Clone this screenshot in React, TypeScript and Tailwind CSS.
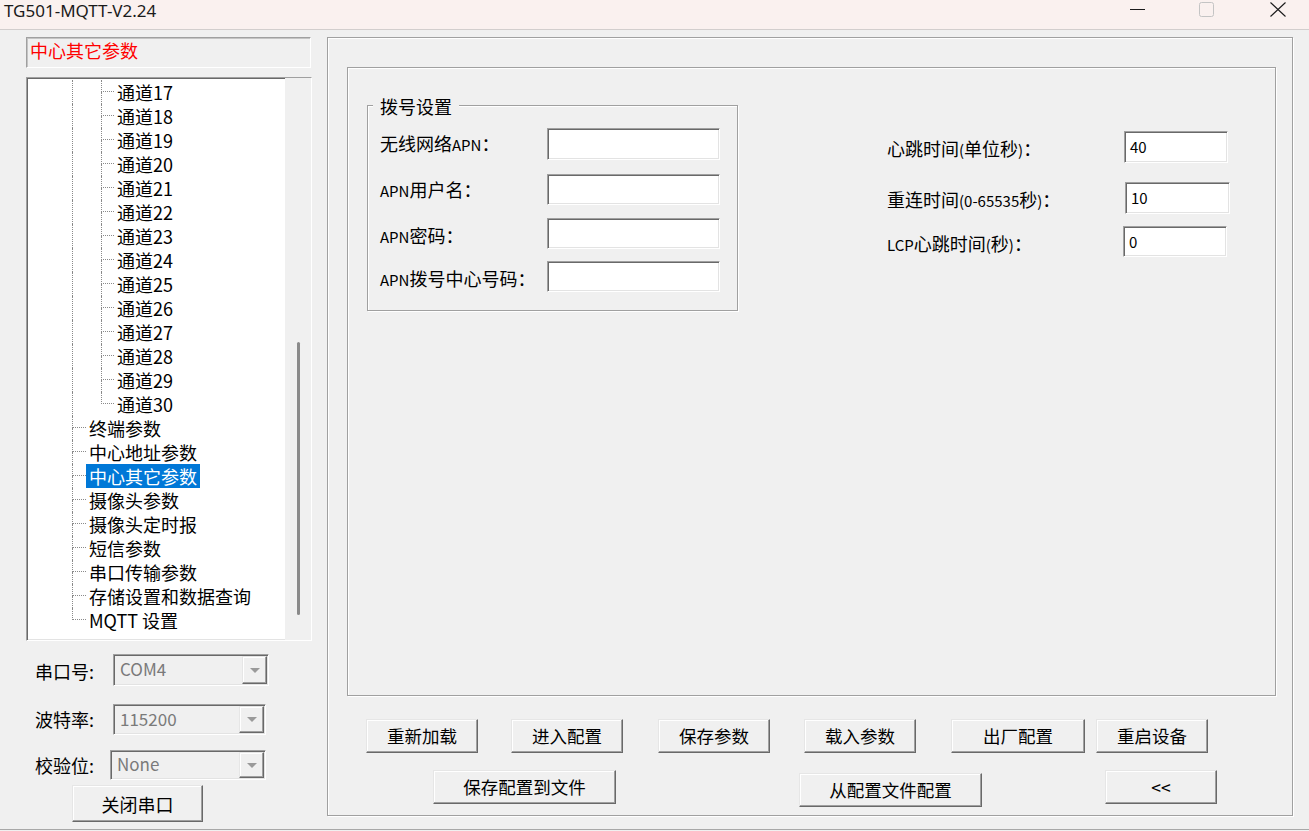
import React from "react";

const sunken =
  "border border-t-[#a0a0a0] border-l-[#a0a0a0] border-r-white border-b-white shadow-[inset_1px_1px_0_#696969,inset_-1px_-1px_0_#e3e3e3]";
const raised =
  "border border-t-[#e6e6e6] border-l-[#e6e6e6] border-r-[#696969] border-b-[#696969] shadow-[inset_-1px_-1px_0_#a0a0a0,inset_1px_1px_0_#ffffff] bg-[#f0f0f0]";
const etched = "border border-[#a0a0a0] shadow-[1px_1px_0_#ffffff,inset_1px_1px_0_#ffffff]";
const dot = "border-dotted border-[#8a8a8a]";

function Btn({ label, className = "" }: { label: string; className?: string }) {
  return (
    <div
      className={`${raised} h-[34px] shrink-0 flex items-center justify-center text-[17.5px] leading-none text-black ${className}`}
    >
      {label}
    </div>
  );
}

function Connector({ last, w }: { last: boolean; w: string }) {
  return (
    <div className={`${w} shrink-0 flex flex-col`}>
      <div className={`h-[12px] border-l border-b ${dot}`} />
      <div className={`h-[12px] ${last ? "" : `border-l ${dot}`}`} />
    </div>
  );
}

function Combo({ cls, value }: { cls: string; value: string }) {
  return (
    <div className={`${sunken} ${cls} bg-[#f0f0f0] flex items-stretch p-[1px] shrink-0`}>
      <div className="flex-1 flex items-center pl-[5px] pb-[3px] text-[17px] text-[#7a7a7a] leading-none">{value}</div>
      <div className={`${raised} w-[25px] flex items-center justify-center`}>
        <svg width="10" height="5" viewBox="0 0 10 5">
          <path d="M0 0 H10 L5 5 Z" fill="#9a9a9a" />
        </svg>
      </div>
    </div>
  );
}

function Edit({ cls, value = "" }: { cls: string; value?: string }) {
  return (
    <div className={`${sunken} ${cls} bg-white shrink-0 flex items-center pl-[5px] pb-[1px] text-[15px] leading-none text-black`}>
      {value}
    </div>
  );
}

const channels = Array.from({ length: 14 }, (_, i) => `通道${17 + i}`);
const tops = [
  "终端参数",
  "中心地址参数",
  "中心其它参数",
  "摄像头参数",
  "摄像头定时报",
  "短信参数",
  "串口传输参数",
  "存储设置和数据查询",
  "MQTT 设置",
];

export default function App() {
  return (
    <div className="w-[1309px] h-[831px] bg-[#f0f0f0] overflow-hidden font-['Noto_Sans_CJK_SC',sans-serif] text-black flex flex-col">
      {/* Title bar */}
      <div className="h-[30px] shrink-0 bg-[#faf1ef] border-b border-[#d2cecd] flex items-start">
        <span className="ml-[4px] leading-[21px] text-[17px] text-[#1b1b1b] font-['Noto_Sans',sans-serif]">
          TG501-MQTT-V2.24
        </span>
        <div className="ml-auto flex items-start pr-[23px]">
          <svg width="15" height="20" viewBox="0 0 15 20">
            <line x1="0" y1="9.5" x2="15" y2="9.5" stroke="#1b1b1b" strokeWidth="1" />
          </svg>
          <svg width="15" height="20" viewBox="0 0 15 20" className="ml-[54px]">
            <rect x="0.5" y="2.5" width="14" height="14" rx="2" fill="none" stroke="#c4c4c4" strokeWidth="1" />
          </svg>
          <svg width="16" height="20" viewBox="0 0 16 20" className="ml-[56px]">
            <path d="M0.5 2.5 L15.5 16.5 M15.5 2.5 L0.5 16.5" stroke="#1b1b1b" strokeWidth="1.1" fill="none" />
          </svg>
        </div>
      </div>

      {/* Body */}
      <div className="h-[799px] shrink-0 flex">
        {/* Left column */}
        <div className="w-[311px] shrink-0 pl-[26px] flex flex-col">
          <div className="w-[285px] h-[31px] mt-[7px] border border-t-[#a0a0a0] border-l-[#a0a0a0] border-r-white border-b-white shadow-[inset_1px_1px_0_#c4c4c4] flex items-center pl-[3px] pb-[5px] text-[18px] leading-none text-[#ff0000]">
            中心其它参数
          </div>

          {/* Tree */}
          <div className={`${sunken} mt-[9px] w-[286px] h-[564px] flex bg-white overflow-hidden`}>
            <div className="w-[258px] shrink-0 pt-[2px] pl-[1px] text-[18px] leading-[24px]">
              {channels.map((c, i) => (
                <div key={c} className="flex h-[24px]">
                  <div className="w-[44px] shrink-0" />
                  <div className={`w-[29px] shrink-0 border-l ${dot}`} />
                  <Connector last={i === channels.length - 1} w="w-[13px]" />
                  <span className="ml-[3px] whitespace-nowrap">{c}</span>
                </div>
              ))}
              {tops.map((t, i) => (
                <div key={t} className="flex h-[24px]">
                  <div className="w-[44px] shrink-0" />
                  <Connector last={i === tops.length - 1} w="w-[14px]" />
                  <span
                    className={`px-[3px] whitespace-nowrap ${t === "中心其它参数" ? "bg-[#0078d7] text-white" : ""}`}
                  >
                    {t}
                  </span>
                </div>
              ))}
            </div>
            <div className="flex-1 bg-[#f0f0f0] flex justify-center">
              <div className="w-[3px] h-[273px] mt-[264px] rounded-full bg-[#8a8a8a]" />
            </div>
          </div>

          {/* Serial settings */}
          <div className="mt-[13px] flex items-center pl-[9px] text-[18px] leading-none">
            <span className="w-[78px] pt-[2px] shrink-0">串口号:</span>
            <Combo cls="w-[156px] h-[32px]" value="COM4" />
          </div>
          <div className="mt-[18px] flex items-center pl-[9px] text-[18px] leading-none">
            <span className="w-[78px] pb-[1px] shrink-0">波特率:</span>
            <Combo cls="w-[153px] h-[31px]" value="115200" />
          </div>
          <div className="mt-[15px] flex items-center pl-[9px] text-[18px] leading-none">
            <span className="w-[75px] shrink-0">校验位:</span>
            <Combo cls="w-[156px] h-[30px]" value="None" />
          </div>
          <div className={`${raised} mt-[5px] ml-[46px] w-[131px] h-[37px] flex items-center justify-center text-[18px] leading-none`}>
            关闭串口
          </div>
        </div>

        {/* Right frame */}
        <div className={`${etched} ml-[16px] mt-[7px] w-[966px] h-[779px] shrink-0 flex flex-col`}>
          <div className={`${etched} mt-[29px] ml-[19px] w-[929px] h-[629px] shrink-0 flex items-start`}>
            {/* Group box */}
            <div className={`${etched} mt-[37px] ml-[19px] w-[371px] h-[206px] shrink-0 flex flex-col pl-[12px] text-[18px] leading-none`}>
              <div className="-mt-[12px] -ml-[7px] w-fit px-[7px] bg-[#f0f0f0] leading-[24px] pb-[1px]">拨号设置</div>
              <div className="mt-[9px] flex items-center">
                <span className="w-[167px] shrink-0 pb-[3px] whitespace-nowrap">
                  无线网络<span className="text-[15px]">APN</span>：
                </span>
                <Edit cls="w-[173px] h-[32px]" />
              </div>
              <div className="mt-[14px] flex items-center">
                <span className="w-[167px] shrink-0 pb-[2px] whitespace-nowrap">
                  <span className="text-[15px]">APN</span>用户名：
                </span>
                <Edit cls="w-[173px] h-[31px]" />
              </div>
              <div className="mt-[13px] flex items-center">
                <span className="w-[167px] shrink-0 pt-[3px] whitespace-nowrap">
                  <span className="text-[15px]">APN</span>密码：
                </span>
                <Edit cls="w-[173px] h-[31px]" />
              </div>
              <div className="mt-[12px] flex items-center">
                <span className="w-[167px] shrink-0 pt-[3px] whitespace-nowrap">
                  <span className="text-[15px]">APN</span>拨号中心号码：
                </span>
                <Edit cls="w-[173px] h-[31px]" />
              </div>
            </div>

            {/* Right params */}
            <div className="ml-[149px] mt-[63px] flex flex-col text-[18px] leading-none">
              <div className="flex items-center">
                <span className="w-[237px] shrink-0 pt-[2px] whitespace-nowrap">
                  心跳时间<span className="text-[15px]">(</span>单位秒<span className="text-[15px]">)</span>：
                </span>
                <Edit cls="w-[104px] h-[32px]" value="40" />
              </div>
              <div className="mt-[19px] flex items-center">
                <span className="w-[237px] shrink-0 pt-[2px] whitespace-nowrap">
                  重连时间<span className="text-[15px]">(0-65535</span>秒<span className="text-[15px]">)</span>：
                </span>
                <Edit cls="ml-[1px] w-[105px] h-[32px]" value="10" />
              </div>
              <div className="mt-[12px] flex items-center">
                <span className="w-[236px] shrink-0 pt-[3px] whitespace-nowrap">
                  <span className="text-[15px]">LCP</span>心跳时间<span className="text-[15px]">(</span>秒
                  <span className="text-[15px]">)</span>：
                </span>
                <Edit cls="w-[104px] h-[31px]" value="0" />
              </div>
            </div>
          </div>

          {/* Buttons row 1 */}
          <div className="mt-[23px] ml-[38px] flex">
            <Btn label="重新加载" className="w-[112px]" />
            <Btn label="进入配置" className="ml-[33px] w-[112px]" />
            <Btn label="保存参数" className="ml-[35px] w-[112px]" />
            <Btn label="载入参数" className="ml-[34px] w-[112px]" />
            <Btn label="出厂配置" className="ml-[35px] w-[134px]" />
            <Btn label="重启设备" className="ml-[11px] w-[112px]" />
          </div>
          {/* Buttons row 2 */}
          <div className="mt-[17px] ml-[105px] flex items-start">
            <Btn label="保存配置到文件" className="w-[183px]" />
            <Btn label="从配置文件配置" className="ml-[183px] mt-[3px] w-[183px]" />
            <Btn label="<<" className="ml-[123px] w-[112px]" />
          </div>
        </div>
      </div>

      {/* Window bottom edge */}
      <div className="h-[2px] shrink-0 border-t border-[#a8a8a8]" />
    </div>
  );
}
